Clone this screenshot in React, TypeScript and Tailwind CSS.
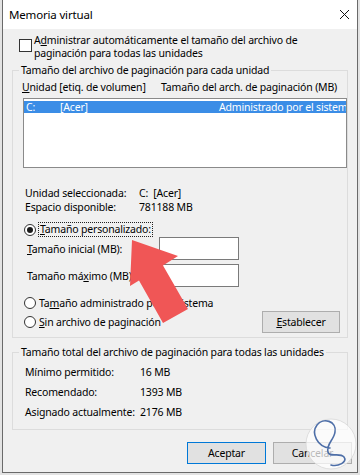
import React from "react";

function Radio({ checked }: { checked?: boolean }) {
  return (
    <span className="flex h-[12px] w-[12px] shrink-0 items-center justify-center rounded-full border border-[#333333] bg-white">
      {checked && <span className="h-[6px] w-[6px] rounded-full bg-[#1a1a1a]" />}
    </span>
  );
}

export default function App() {
  return (
    <div className="relative h-[475px] w-[360px] overflow-hidden whitespace-nowrap bg-[#e3e3e3] font-['Segoe_UI','Noto_Sans',sans-serif] text-[10.5px] leading-[12px] tracking-[-0.17px] text-black">
      <div className="ml-[2px] flex h-[473px] w-[356px] flex-col border-x border-b border-[#6a6a6a] bg-[#f0f0f0]">
        {/* Title bar */}
        <div className="flex h-[29px] shrink-0 items-center justify-between bg-white pl-[6px] pr-[7px]">
          <span className="text-[11.5px]">Memoria virtual</span>
          <svg width="11" height="11" viewBox="0 0 11 11">
            <path d="M1 1L10 10M10 1L1 10" stroke="#111" strokeWidth="1" />
          </svg>
        </div>

        {/* Checkbox */}
        <div className="mt-[5px] flex items-start pl-[16px]">
          <span className="mt-[5px] h-[13px] w-[13px] shrink-0 border border-[#333333] bg-white" />
          <span className="ml-[2px] leading-[13px]">
            A<u>d</u>ministrar automáticamente el tamaño del archivo de
            <br />
            paginación para todas las unidades
          </span>
        </div>

        {/* Group 1 */}
        <div className="ml-[9px] mt-[10px] h-[268px] w-[336px] shrink-0 border border-[#dcdcdc]">
          <div className="-mt-[7px] ml-[6px] w-fit bg-[#f0f0f0] px-[2px]">
            Tamaño del archivo de paginación para cada unidad
          </div>
          <div className="mt-[5px] flex pl-[9px]">
            <span className="w-[139px] shrink-0">
              <u>U</u>nidad [etiq. de volumen]
            </span>
            <span>Tamaño del arch. de paginación (MB)</span>
          </div>
          <div className="ml-[10px] mt-[5px] h-[70px] w-[324px] overflow-hidden border border-[#8a8a8a] bg-white pt-[2px]">
            <div className="flex h-[12px] items-center overflow-hidden bg-[#3b8de6] pl-[2px] text-white">
              <span className="w-[34px] shrink-0">C:</span>
              <span className="w-[159px] shrink-0">[Acer]</span>
              <span>Administrado por el sistema</span>
            </div>
          </div>

          <div className="mt-[18px] flex h-[14px] items-center pl-[12px]">
            <span className="w-[114px] shrink-0">Unidad seleccionada:</span>
            <span>C:&nbsp; [Acer]</span>
          </div>
          <div className="flex h-[14px] items-center pl-[12px]">
            <span className="w-[114px] shrink-0">Espacio disponible:</span>
            <span>781188 MB</span>
          </div>

          <div className="mt-[8px] flex h-[15px] items-center pl-[11px]">
            <Radio checked />
            <span className="ml-[2px] border border-dotted border-[#222] px-[1px] leading-[13px]">
              <u>T</u>amaño personalizado:
            </span>
          </div>
          <div className="flex h-[23px] items-center pl-[14px]">
            <span className="w-[132px] shrink-0">
              <u>T</u>amaño inicial (MB):
            </span>
            <span className="h-[23px] w-[80px] border border-[#7a7a7a] bg-white" />
          </div>
          <div className="mt-[4px] flex h-[23px] items-center pl-[14px]">
            <span className="w-[132px] shrink-0">
              Tamaño má<u>x</u>imo (MB):
            </span>
            <span className="h-[23px] w-[80px] border border-[#7a7a7a] bg-white" />
          </div>
          <div className="mt-[8px] flex h-[16px] items-center pl-[11px]">
            <Radio />
            <span className="ml-[3px]">
              Ta<u>m</u>año administrado por el sistema
            </span>
          </div>
          <div className="flex h-[22px] items-center pl-[11px] pr-[7px]">
            <Radio />
            <span className="ml-[3px]">
              <u>S</u>in archivo de paginación
            </span>
            <span className="ml-auto flex h-[22px] w-[78px] items-center justify-center border border-[#adadad] bg-[#e1e1e1]">
              <u>E</u>stablecer
            </span>
          </div>
        </div>

        {/* Group 2 */}
        <div className="ml-[9px] mt-[14px] h-[78px] w-[336px] shrink-0 border border-[#dcdcdc]">
          <div className="-mt-[7px] ml-[6px] w-fit bg-[#f0f0f0] px-[2px]">
            Tamaño total del archivo de paginación para todas las unidades
          </div>
          <div className="mt-[4px] flex h-[20px] items-center pl-[12px]">
            <span className="w-[115px] shrink-0">Mínimo permitido:</span>
            <span>16 MB</span>
          </div>
          <div className="flex h-[20px] items-center pl-[12px]">
            <span className="w-[115px] shrink-0">Recomendado:</span>
            <span>1393 MB</span>
          </div>
          <div className="flex h-[20px] items-center pl-[12px]">
            <span className="w-[115px] shrink-0">Asignado actualmente:</span>
            <span>2176 MB</span>
          </div>
        </div>

        {/* Buttons */}
        <div className="mt-[12px] flex justify-end gap-[7px] pr-[5px]">
          <span className="flex h-[22px] w-[79px] items-center justify-center border border-[#0078d7] bg-[#e1e1e1]">
            Aceptar
          </span>
          <span className="flex h-[22px] w-[79px] items-center justify-center border border-[#adadad] bg-[#e1e1e1]">
            Cancelar
          </span>
        </div>
      </div>

      {/* Overlays: red arrow and watermark */}
      <svg
        className="pointer-events-none absolute left-0 top-0"
        width="360"
        height="475"
        viewBox="0 0 360 475"
      >
        <polygon
          points="132,240 178,256 163,265.5 188,309 163,323 139,280.5 130,286"
          fill="#f05656"
        />
        <circle cx="331" cy="444" r="25" fill="#ffffff" fillOpacity="0.72" stroke="#d8d8d8" strokeWidth="0.8" />
        <path
          d="M330 448 C317 447 311 433 317 425 C323 417 337 421 335 432 C334 440 326 444 328 452 C329 458 340 452 344 457 C348 462 338 467 331 465"
          fill="none"
          stroke="#4e6fa8"
          strokeWidth="1.6"
          strokeLinecap="round"
        />
      </svg>
    </div>
  );
}
